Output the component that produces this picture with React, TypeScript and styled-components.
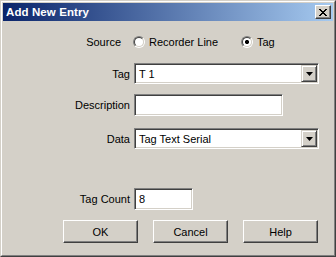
import React from "react";
import styled, { createGlobalStyle } from "styled-components";

const Global = createGlobalStyle`
  html, body { margin: 0; padding: 0; background: #d4d0c8; }
  body { font-family: "Liberation Sans", Arial, sans-serif; font-size: 11px; color: #000; }
  * { box-sizing: border-box; }
`;

const Window = styled.div`
  width: 336px;
  height: 257px;
  border: 1px solid;
  border-color: #d4d0c8 #404040 #404040 #d4d0c8;
  background: #d4d0c8;
`;

const Frame = styled.div`
  width: 100%;
  height: 100%;
  border: 1px solid;
  border-color: #ffffff #808080 #808080 #ffffff;
  padding: 1px;
  display: flex;
  flex-direction: column;
`;

const TitleBar = styled.div`
  height: 18px;
  display: flex;
  align-items: center;
  justify-content: space-between;
  padding: 0 2px 0 3px;
  background: linear-gradient(to right, #0a246a, #a6caf0);
`;

const Title = styled.span`
  color: #fff;
  font-weight: bold;
  font-size: 11.5px;
  letter-spacing: 0.1px;
`;

const CloseButton = styled.div`
  width: 16px;
  height: 14px;
  background: #d4d0c8;
  border: 1px solid;
  border-color: #ffffff #404040 #404040 #ffffff;
  box-shadow: inset -1px -1px 0 #808080;
  display: flex;
  align-items: center;
  justify-content: center;
`;

const Client = styled.div`
  flex: 1;
  display: flex;
  flex-direction: column;
  padding-top: 13px;
`;

const FieldRow = styled.div<{ $gap: number }>`
  display: grid;
  grid-template-columns: 127px 1fr;
  column-gap: 4px;
  align-items: center;
  margin-top: ${(p) => p.$gap}px;
`;

const Label = styled.span<{ $pad?: number }>`
  text-align: right;
  padding-right: ${(p) => p.$pad ?? 0}px;
  white-space: nowrap;
`;

const RadioGroup = styled.div`
  display: flex;
  align-items: center;
  height: 16px;
  margin-left: -1px;
`;

const RadioItem = styled.label<{ $width: number }>`
  display: flex;
  align-items: center;
  gap: 4px;
  width: ${(p) => p.$width}px;
`;

const RadioCircle = styled.span<{ $checked?: boolean }>`
  width: 12px;
  height: 12px;
  border-radius: 50%;
  border: 1px solid;
  border-color: #808080 #ffffff #ffffff #808080;
  display: flex;
  align-items: center;
  justify-content: center;
  &::before {
    content: "";
    width: 10px;
    height: 10px;
    border-radius: 50%;
    box-sizing: border-box;
    border: 1px solid;
    border-color: #404040 #d4d0c8 #d4d0c8 #404040;
    background: #fff;
    background-image: ${(p) =>
      p.$checked ? "radial-gradient(circle, #000 0 2px, transparent 2.2px)" : "none"};
  }
`;

const Sunken = styled.div<{ $width: number; $height: number }>`
  width: ${(p) => p.$width}px;
  height: ${(p) => p.$height}px;
  background: #fff;
  border: 1px solid;
  border-color: #808080 #ffffff #ffffff #808080;
  box-shadow: inset 1px 1px 0 #404040, inset -1px -1px 0 #d4d0c8;
  display: flex;
  align-items: center;
  padding: 1px 1px 1px 4px;
`;

const FieldText = styled.span`
  flex: 1;
  white-space: nowrap;
`;

const DropButton = styled.div`
  width: 16px;
  height: 17px;
  background: #d4d0c8;
  border: 1px solid;
  border-color: #d4d0c8 #404040 #404040 #d4d0c8;
  box-shadow: inset 1px 1px 0 #fff, inset -1px -1px 0 #808080;
  display: flex;
  align-items: center;
  justify-content: center;
`;

const ButtonRow = styled.div`
  display: flex;
  gap: 15px;
  padding-left: 60px;
  margin-top: 10px;
`;

const Button = styled.div`
  width: 75px;
  height: 23px;
  background: #d4d0c8;
  border: 1px solid;
  border-color: #ffffff #404040 #404040 #ffffff;
  box-shadow: inset -1px -1px 0 #808080;
  display: flex;
  align-items: center;
  justify-content: center;
`;

const Arrow = () => (
  <svg width="7" height="4" viewBox="0 0 7 4">
    <path d="M0 0h7L3.5 4z" fill="#000" />
  </svg>
);

const CloseX = () => (
  <svg width="8" height="7" viewBox="0 0 8 7" shapeRendering="crispEdges">
    <path
      d="M0 0h2v1h-2zM6 0h2v1h-2zM1 1h2v1h-2zM5 1h2v1h-2zM2 2h4v1h-4zM3 3h2v1h-2zM2 4h4v1h-4zM1 5h2v1h-2zM5 5h2v1h-2zM0 6h2v1h-2zM6 6h2v1h-2z"
      fill="#000"
    />
  </svg>
);

export default function App() {
  return (
    <>
      <Global />
      <Window>
        <Frame>
          <TitleBar>
            <Title>Add New Entry</Title>
            <CloseButton>
              <CloseX />
            </CloseButton>
          </TitleBar>
          <Client>
            <FieldRow $gap={0}>
              <Label $pad={9}>Source</Label>
              <RadioGroup>
                <RadioItem $width={108}>
                  <RadioCircle />
                  <span>Recorder Line</span>
                </RadioItem>
                <RadioItem $width={60}>
                  <RadioCircle $checked />
                  <span>Tag</span>
                </RadioItem>
              </RadioGroup>
            </FieldRow>
            <FieldRow $gap={13}>
              <Label>Tag</Label>
              <Sunken $width={185} $height={21}>
                <FieldText>T 1</FieldText>
                <DropButton>
                  <Arrow />
                </DropButton>
              </Sunken>
            </FieldRow>
            <FieldRow $gap={10}>
              <Label>Description</Label>
              <Sunken $width={149} $height={22}>
                <FieldText />
              </Sunken>
            </FieldRow>
            <FieldRow $gap={12}>
              <Label>Data</Label>
              <Sunken $width={185} $height={21}>
                <FieldText>Tag Text Serial</FieldText>
                <DropButton>
                  <Arrow />
                </DropButton>
              </Sunken>
            </FieldRow>
            <FieldRow $gap={39}>
              <Label>Tag Count</Label>
              <Sunken $width={59} $height={22}>
                <FieldText>8</FieldText>
              </Sunken>
            </FieldRow>
            <ButtonRow>
              <Button>OK</Button>
              <Button>Cancel</Button>
              <Button>Help</Button>
            </ButtonRow>
          </Client>
        </Frame>
      </Window>
    </>
  );
}
